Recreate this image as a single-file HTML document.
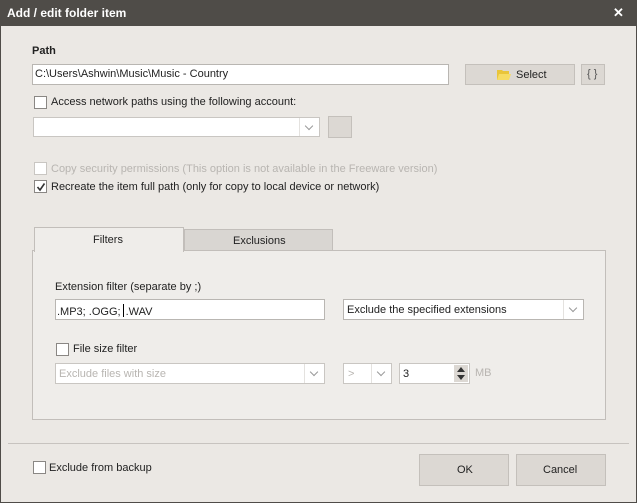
<!DOCTYPE html>
<html><head><meta charset="utf-8"><style>
*{box-sizing:border-box;margin:0;padding:0}
body{width:637px;height:503px;overflow:hidden;background:#4f4c48;font-family:"Liberation Sans",sans-serif;font-size:11px;color:#222;position:relative}
.win{position:absolute;left:1px;top:26px;width:635px;height:476px;background:#ebe8e4}
.a{position:absolute}
.t{position:absolute;white-space:nowrap;font-size:11px}
.inp{position:absolute;background:#fff;border:1px solid #b9b6b2}
.btn{position:absolute;background:#dcd8d3;border:1px solid #c4c0bb;text-align:center}
.cb{position:absolute;width:13px;height:13px;border:1px solid #8a8784;background:#fff}
.cb.dis{border-color:#c9c6c2}
.dd{position:absolute;right:0;top:0;bottom:0;width:20px;border-left:1px solid #e4e2df}
.dd:after{content:"";position:absolute;left:6px;top:5px;width:5px;height:5px;border-right:1px solid #999;border-bottom:1px solid #999;transform:rotate(45deg)}
.dis{color:#b8b5b1}
</style></head><body>
<div class="t" style="left:7px;top:6px;color:#fff;font-weight:bold;font-size:12px">Add / edit folder item</div>
<div class="t" style="left:613px;top:5px;color:#fff;font-weight:bold;font-size:13px">✕</div>
<div class="win"></div>
<div class="t" style="left:32px;top:45px;font-weight:bold">Path</div>
<div class="inp" style="left:32px;top:64px;width:417px;height:21px"><span class="t" style="left:2px;top:3px">C:\Users\Ashwin\Music\Music - Country</span></div>
<div class="btn" style="left:465px;top:64px;width:110px;height:21px">
<svg class="a" style="left:30px;top:3px" width="16" height="14"><path d="M1 2h5l1 1h6v9H1z" fill="#e9c53a"/><path d="M3 6h12l-2 6H1z" fill="#f6dc63"/></svg>
<span class="t" style="left:50px;top:4px">Select</span></div>
<div class="btn" style="left:581px;top:64px;width:24px;height:21px"><span class="t" style="left:5px;top:3px;color:#555">{ }</span></div>
<div class="cb" style="left:34px;top:96px"></div>
<div class="t" style="left:51px;top:96px">Access network paths using the following account:</div>
<div class="inp" style="left:33px;top:117px;width:287px;height:20px;border-color:#c9c6c2"><div class="dd"></div></div>
<div class="btn" style="left:328px;top:116px;width:24px;height:22px"></div>
<div class="cb dis" style="left:34px;top:162px"></div>
<div class="t dis" style="left:51px;top:163px">Copy security permissions (This option is not available in the Freeware version)</div>
<div class="cb" style="left:34px;top:180px"><svg class="a" style="left:1px;top:1px" width="10" height="10"><path d="M1.5 5l2.5 3 4.5-6.5" stroke="#333" stroke-width="1.6" fill="none"/></svg></div>
<div class="t" style="left:51px;top:181px">Recreate the item full path (only for copy to local device or network)</div>
<div class="a" style="left:32px;top:250px;width:574px;height:170px;background:#efedea;border:1px solid #c2beba"></div>
<div class="a" style="left:184px;top:229px;width:149px;height:22px;background:#d9d6d2;border:1px solid #c2beba"><span class="t" style="left:48px;top:5px">Exclusions</span></div>
<div class="a" style="left:34px;top:227px;width:150px;height:25px;background:#efedea;border:1px solid #c2beba;border-bottom:none"><span class="t" style="left:58px;top:6px">Filters</span></div>
<div class="t" style="left:55px;top:281px">Extension filter (separate by ;)</div>
<div class="inp" style="left:55px;top:299px;width:270px;height:21px"><span class="t" style="left:1px;top:4px">.MP3; .OGG;<span style="display:inline-block;width:1px;height:13px;background:#000;vertical-align:-2px;margin:0 2px"></span>.WAV</span></div>
<div class="inp" style="left:343px;top:299px;width:241px;height:21px"><span class="t" style="left:3px;top:4px">Exclude the specified extensions</span><div class="dd"></div></div>
<div class="cb" style="left:56px;top:343px"></div>
<div class="t" style="left:73px;top:343px">File size filter</div>
<div class="inp" style="left:55px;top:363px;width:270px;height:21px;border-color:#c9c6c2"><span class="t dis" style="left:3px;top:4px">Exclude files with size</span><div class="dd"></div></div>
<div class="inp" style="left:343px;top:363px;width:49px;height:21px;border-color:#c9c6c2"><span class="t dis" style="left:4px;top:4px">&gt;</span><div class="dd"></div></div>
<div class="inp" style="left:399px;top:363px;width:71px;height:21px;border-color:#c9c6c2"><span class="t" style="left:3px;top:4px">3</span>
<div class="a" style="right:1px;top:1px;width:14px;height:17px;background:#dcd8d3"><svg width="14" height="17"><path d="M3 7l4-5 4 5z M3 10l4 5 4-5z" fill="#333"/></svg></div></div>
<div class="t dis" style="left:475px;top:367px">MB</div>
<div class="a" style="left:8px;top:443px;width:621px;height:1px;background:#c7c3bf"></div>
<div class="cb" style="left:33px;top:461px"></div>
<div class="t" style="left:49px;top:462px">Exclude from backup</div>
<div class="btn" style="left:419px;top:454px;width:90px;height:32px"><span class="t" style="left:37px;top:9px">OK</span></div>
<div class="btn" style="left:516px;top:454px;width:90px;height:32px"><span class="t" style="left:26px;top:9px">Cancel</span></div>
</body></html>
